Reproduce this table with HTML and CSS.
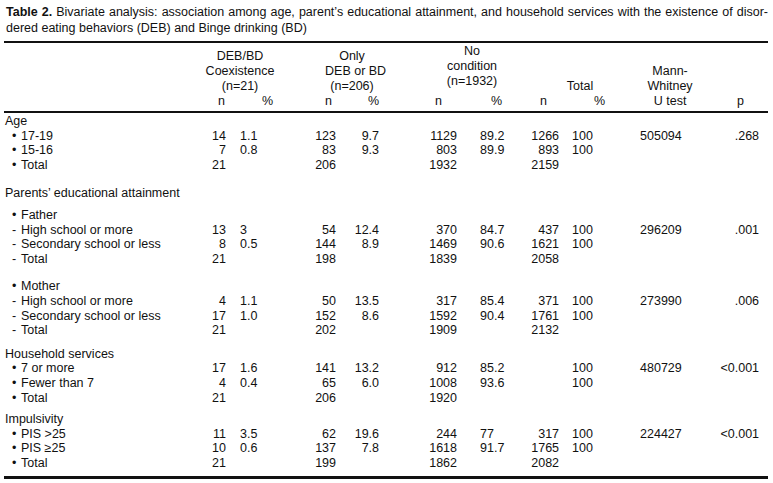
FILE: index.html
```html
<!DOCTYPE html>
<html>
<head>
<meta charset="utf-8">
<link rel="stylesheet" href="styles.css">
</head>
<body>
<div class="page">
  <div class="caption">
    <div class="cap1"><b>Table 2.</b> Bivariate analysis: association among age, parent’s educational attainment, and household services with the existence of disor-</div>
    <div class="cap2">dered eating behaviors (DEB) and Binge drinking (BD)</div>
  </div>
  <table class="tbl">
    <colgroup>
      <col class="w-lab"><col class="w-c1"><col class="w-c2"><col class="w-c3"><col class="w-c4"><col class="w-c5"><col class="w-c6"><col class="w-c7"><col class="w-c8"><col class="w-c9"><col class="w-c10">
    </colgroup>
    <thead>
      <tr class="ha">
        <th rowspan="2"></th>
        <th colspan="2" class="g-deb">DEB/BD<br>Coexistence<br>(n=21)</th>
        <th colspan="2" class="g-only">Only<br>DEB or BD<br>(n=206)</th>
        <th colspan="2" class="g-no">No<br>condition<br>(n=1932)</th>
        <th colspan="2" class="g-tot">Total</th>
        <th rowspan="2" class="g-mw">Mann-<br>Whitney<br>U test</th>
        <th rowspan="2" class="g-p">p</th>
      </tr>
      <tr class="hb">
        <th class="s1">n</th><th class="s2">%</th>
        <th class="s3">n</th><th class="s4">%</th>
        <th class="s5">n</th><th class="s6">%</th>
        <th class="s7">n</th><th class="s8">%</th>
      </tr>
    </thead>
    <tbody>
      <tr class="first"><td class="lab">Age</td><td></td><td></td><td></td><td></td><td></td><td></td><td></td><td></td><td></td><td></td></tr>
      <tr><td class="lab sub"><span class="mk">•</span>17-19</td><td class="n1">14</td><td class="p1">1.1</td><td class="n2">123</td><td class="p2">9.7</td><td class="n3">1129</td><td class="p3">89.2</td><td class="n4">1266</td><td class="p4">100</td><td class="mw">505094</td><td class="pv">.268</td></tr>
      <tr><td class="lab sub"><span class="mk">•</span>15-16</td><td class="n1">7</td><td class="p1">0.8</td><td class="n2">83</td><td class="p2">9.3</td><td class="n3">803</td><td class="p3">89.9</td><td class="n4">893</td><td class="p4">100</td><td class="mw"></td><td class="pv"></td></tr>
      <tr><td class="lab sub"><span class="mk">•</span>Total</td><td class="n1">21</td><td class="p1"></td><td class="n2">206</td><td class="p2"></td><td class="n3">1932</td><td class="p3"></td><td class="n4">2159</td><td class="p4"></td><td class="mw"></td><td class="pv"></td></tr>

      <tr class="gap-a"><td class="lab">Parents’ educational attainment</td><td></td><td></td><td></td><td></td><td></td><td></td><td></td><td></td><td></td><td></td></tr>
      <tr class="gap-b"><td class="lab sub"><span class="mk">•</span>Father</td><td></td><td></td><td></td><td></td><td></td><td></td><td></td><td></td><td></td><td></td></tr>
      <tr><td class="lab sub"><span class="mk">-</span>High school or more</td><td class="n1">13</td><td class="p1">3</td><td class="n2">54</td><td class="p2">12.4</td><td class="n3">370</td><td class="p3">84.7</td><td class="n4">437</td><td class="p4">100</td><td class="mw">296209</td><td class="pv">.001</td></tr>
      <tr><td class="lab sub"><span class="mk">-</span>Secondary school or less</td><td class="n1">8</td><td class="p1">0.5</td><td class="n2">144</td><td class="p2">8.9</td><td class="n3">1469</td><td class="p3">90.6</td><td class="n4">1621</td><td class="p4">100</td><td class="mw"></td><td class="pv"></td></tr>
      <tr><td class="lab sub"><span class="mk">-</span>Total</td><td class="n1">21</td><td class="p1"></td><td class="n2">198</td><td class="p2"></td><td class="n3">1839</td><td class="p3"></td><td class="n4">2058</td><td class="p4"></td><td class="mw"></td><td class="pv"></td></tr>

      <tr class="gap-c"><td class="lab sub"><span class="mk">•</span>Mother</td><td></td><td></td><td></td><td></td><td></td><td></td><td></td><td></td><td></td><td></td></tr>
      <tr><td class="lab sub"><span class="mk">-</span>High school or more</td><td class="n1">4</td><td class="p1">1.1</td><td class="n2">50</td><td class="p2">13.5</td><td class="n3">317</td><td class="p3">85.4</td><td class="n4">371</td><td class="p4">100</td><td class="mw">273990</td><td class="pv">.006</td></tr>
      <tr><td class="lab sub"><span class="mk">-</span>Secondary school or less</td><td class="n1">17</td><td class="p1">1.0</td><td class="n2">152</td><td class="p2">8.6</td><td class="n3">1592</td><td class="p3">90.4</td><td class="n4">1761</td><td class="p4">100</td><td class="mw"></td><td class="pv"></td></tr>
      <tr><td class="lab sub"><span class="mk">-</span>Total</td><td class="n1">21</td><td class="p1"></td><td class="n2">202</td><td class="p2"></td><td class="n3">1909</td><td class="p3"></td><td class="n4">2132</td><td class="p4"></td><td class="mw"></td><td class="pv"></td></tr>

      <tr class="gap-d"><td class="lab">Household services</td><td></td><td></td><td></td><td></td><td></td><td></td><td></td><td></td><td></td><td></td></tr>
      <tr><td class="lab sub"><span class="mk">•</span>7 or more</td><td class="n1">17</td><td class="p1">1.6</td><td class="n2">141</td><td class="p2">13.2</td><td class="n3">912</td><td class="p3">85.2</td><td class="n4"></td><td class="p4">100</td><td class="mw">480729</td><td class="pv">&lt;0.001</td></tr>
      <tr><td class="lab sub"><span class="mk">•</span>Fewer than 7</td><td class="n1">4</td><td class="p1">0.4</td><td class="n2">65</td><td class="p2">6.0</td><td class="n3">1008</td><td class="p3">93.6</td><td class="n4"></td><td class="p4">100</td><td class="mw"></td><td class="pv"></td></tr>
      <tr><td class="lab sub"><span class="mk">•</span>Total</td><td class="n1">21</td><td class="p1"></td><td class="n2">206</td><td class="p2"></td><td class="n3">1920</td><td class="p3"></td><td class="n4"></td><td class="p4"></td><td class="mw"></td><td class="pv"></td></tr>

      <tr class="gap-e"><td class="lab">Impulsivity</td><td></td><td></td><td></td><td></td><td></td><td></td><td></td><td></td><td></td><td></td></tr>
      <tr><td class="lab sub"><span class="mk">•</span>PIS &gt;25</td><td class="n1">11</td><td class="p1">3.5</td><td class="n2">62</td><td class="p2">19.6</td><td class="n3">244</td><td class="p3">77</td><td class="n4">317</td><td class="p4">100</td><td class="mw">224427</td><td class="pv">&lt;0.001</td></tr>
      <tr><td class="lab sub"><span class="mk">•</span>PIS ≥25</td><td class="n1">10</td><td class="p1">0.6</td><td class="n2">137</td><td class="p2">7.8</td><td class="n3">1618</td><td class="p3">91.7</td><td class="n4">1765</td><td class="p4">100</td><td class="mw"></td><td class="pv"></td></tr>
      <tr class="last"><td class="lab sub"><span class="mk">•</span>Total</td><td class="n1">21</td><td class="p1"></td><td class="n2">199</td><td class="p2"></td><td class="n3">1862</td><td class="p3"></td><td class="n4">2082</td><td class="p4"></td><td class="mw"></td><td class="pv"></td></tr>
    </tbody>
  </table>
</div>
</body>
</html>
```
FILE: styles.css
```css
html, body {
  margin: 0;
  padding: 0;
  background: #ffffff;
}
body {
  font-family: "Liberation Sans", Arial, sans-serif;
  font-size: 12.5px;
  color: #111111;
}
.page {
  padding: 4px 5px 0 4px;
  width: 764px;
}
.caption {
  padding-left: 2px;
  line-height: 16px;
  font-size: 12.5px;
}
.cap1 {
  white-space: nowrap;
  word-spacing: -0.8px;
  text-align: justify;
  text-align-last: justify;
}
.cap1 b {
  font-weight: bold;
}
.tbl {
  margin-top: 5px;
  width: 764px;
  table-layout: fixed;
  border-collapse: collapse;
  border-top: 2px solid #111;
}
.w-lab { width: 196px; }
.w-c1 { width: 26px; }
.w-c2 { width: 64px; }
.w-c3 { width: 46px; }
.w-c4 { width: 43px; }
.w-c5 { width: 78px; }
.w-c6 { width: 73px; }
.w-c7 { width: 29px; }
.w-c8 { width: 71px; }
.w-c9 { width: 70px; }
.w-c10 { width: 68px; }

th {
  font-weight: normal;
  padding: 0;
  line-height: 15px;
  vertical-align: bottom;
  white-space: nowrap;
}
thead {
  border-bottom: 2px solid #111;
}
.ha th {
  padding-top: 1px;
  text-align: center;
}
.g-deb { padding-right: 10px; }
.g-only { padding-left: 35px; }
.g-no { padding-left: 35px; padding-bottom: 5px; }
.ha .g-mw { padding-left: 10px; padding-bottom: 2px; }
.ha .g-p { padding-left: 22px; padding-right: 9px; padding-bottom: 2px; }
.hb th {
  text-align: left;
  padding-bottom: 2px;
}
.hb .s1 { padding-left: 18px; }
.hb .s2 { padding-left: 36px; }
.hb .s3 { padding-left: 35px; }
.hb .s4 { text-align: right; }
.hb .s5 { padding-left: 56px; }
.hb .s6 { padding-left: 34px; }
.hb .s7 { padding-left: 10px; }
.hb .s8 { padding-left: 35px; }

tbody {
  border-bottom: 3px solid #111;
}
td {
  padding: 0;
  line-height: 14.6px;
  white-space: nowrap;
  vertical-align: top;
}
.lab { text-align: left; padding-left: 1px; }
.lab.sub { padding-left: 8px; }
.mk {
  display: inline-block;
  width: 9px;
}
.n1, .n2, .p2, .n3, .n4 { text-align: right; }
.p1 { padding-left: 14px; }
.p3 { padding-left: 23px; }
.p4 { padding-left: 13px; }
.mw { padding-left: 10px; }
.pv { text-align: right; padding-right: 9px; }

tr.first td { padding-top: 1px; }
tr.gap-a td { padding-top: 14px; }
tr.gap-b td { padding-top: 7px; }
tr.gap-c td { padding-top: 13px; }
tr.gap-d td { padding-top: 9px; }
tr.gap-e td { padding-top: 7px; }
tr.last td { padding-bottom: 6px; }
```
